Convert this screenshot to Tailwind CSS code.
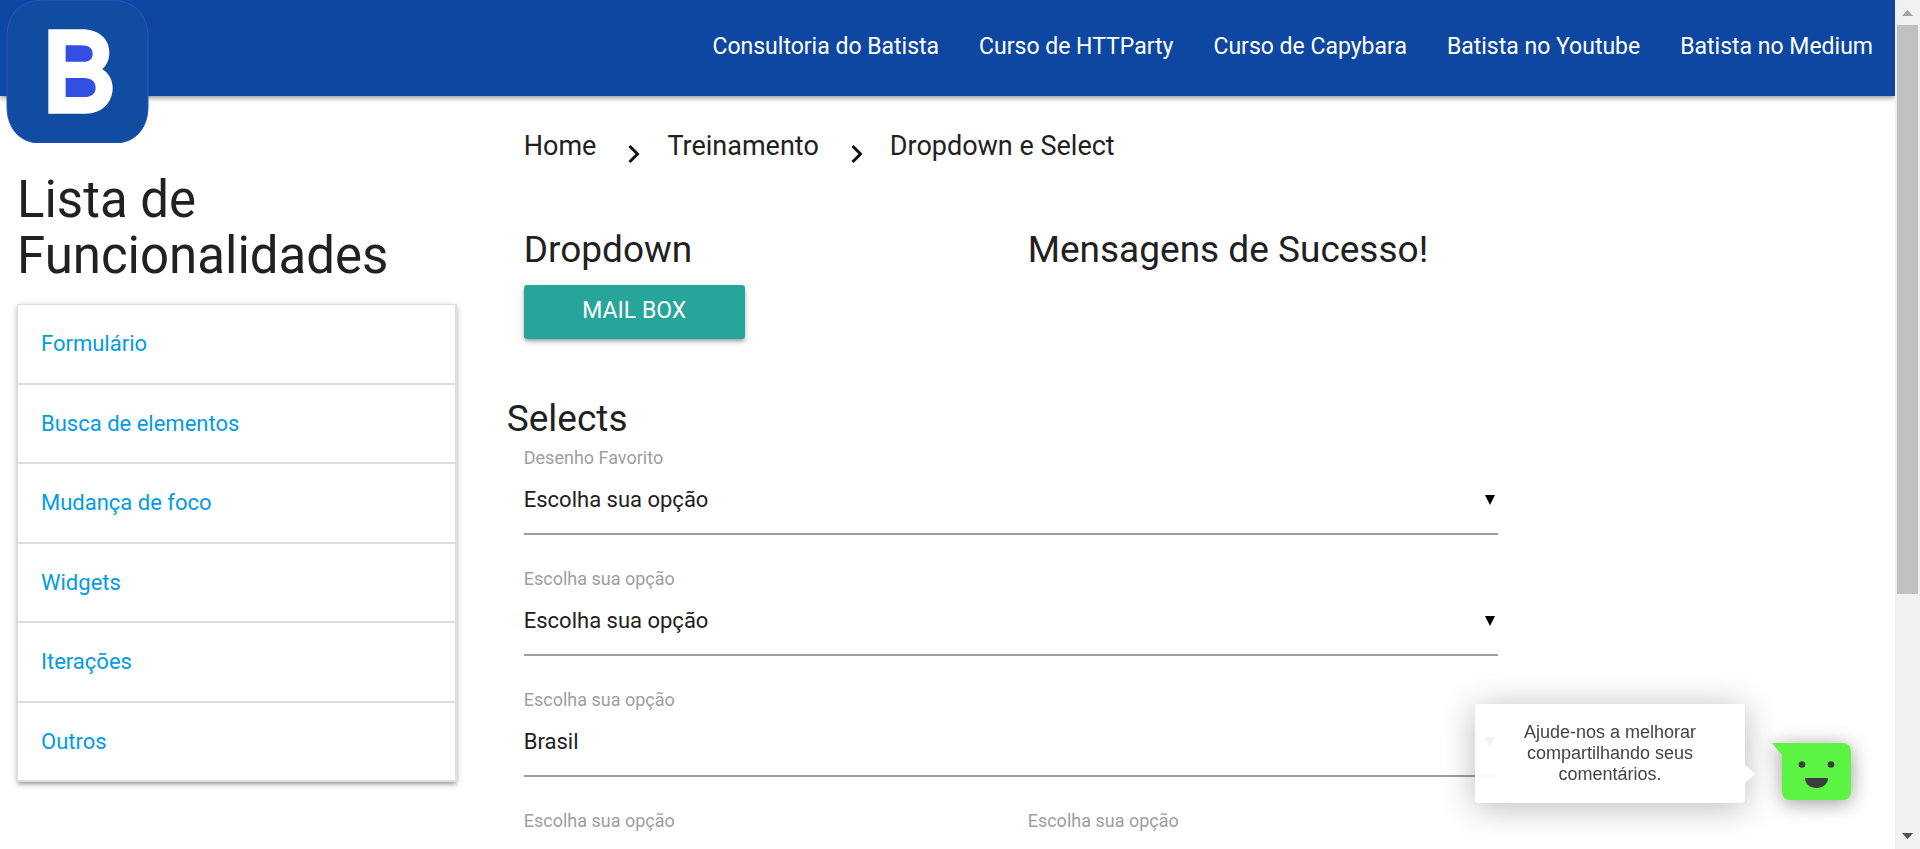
<!DOCTYPE html>
<html lang="pt-BR">
<head>
<meta charset="utf-8">
<meta name="viewport" content="width=device-width, initial-scale=1">
<title>Dropdown e Select</title>
<script src="https://cdn.jsdelivr.net/npm/@tailwindcss/browser@4"></script>
</head>
<body class="bg-white font-['Roboto',sans-serif] text-[22px] text-[#212121]">
<div class="h-screen overflow-hidden pr-[25px]">

<header class="relative z-10 h-24 bg-[#0d47a1] shadow-[0_3px_3px_0_rgba(0,0,0,0.14),0_4px_2px_-3px_rgba(0,0,0,0.12),0_2px_7px_0_rgba(0,0,0,0.2)]">
  <a href="#" aria-label="Batista" class="absolute top-0 left-[6px]">
    <svg class="block h-[143px] w-[143px]" viewBox="18 0 429 429" aria-hidden="true">
      <path d="M125 1H340C400 1 444 45 444 110V320C444 385 405 429 345 429H120C60 429 21 385 21 320V110C21 45 60 1 125 1Z" fill="#104ca0" stroke="#2b50cf" stroke-width="3"/>
      <path d="M145 88H245C298 88 328 118 328 158C328 178 320 196 307 207C326 219 338 240 338 264C338 308 305 341 257 341H145Z" fill="#fff"/>
      <path d="M197 136H243C266 136 278 144 278 161C278 177 268 185 250 185H197ZM197 234H252C274 234 287 245 287 263C287 281 274 291 252 291H197Z" fill="#314fe2"/>
    </svg>
  </a>
  <nav class="flex h-24 justify-end gap-10 pr-[22px] text-[23px] leading-[94px] text-white">
    <a href="#">Consultoria do Batista</a>
    <a href="#">Curso de HTTParty</a>
    <a href="#">Curso de Capybara</a>
    <a href="#">Batista no Youtube</a>
    <a href="#">Batista no Medium</a>
  </nav>
</header>

<div class="flex">
  <aside class="w-1/4 shrink-0 px-[17px] pt-[76px]">
    <h4 class="text-[51px] leading-[56px]">Lista de Funcionalidades</h4>
    <ul class="mt-5 grid h-[478px] auto-rows-fr border-t border-r-2 border-l border-[#ddd] bg-white text-[#039be5] shadow-[0_3px_3px_0_rgba(0,0,0,0.14),0_4px_2px_-3px_rgba(0,0,0,0.12),0_2px_7px_0_rgba(0,0,0,0.2)]">
      <li class="flex items-center border-b-2 border-[#ddd] px-[23px]"><a href="#">Formulário</a></li>
      <li class="flex items-center border-b-2 border-[#ddd] px-[23px]"><a href="#">Busca de elementos</a></li>
      <li class="flex items-center border-b-2 border-[#ddd] px-[23px]"><a href="#">Mudança de foco</a></li>
      <li class="flex items-center border-b-2 border-[#ddd] px-[23px]"><a href="#">Widgets</a></li>
      <li class="flex items-center border-b-2 border-[#ddd] px-[23px]"><a href="#">Iterações</a></li>
      <li class="flex items-center border-b-2 border-[#ddd] px-[23px]"><a href="#">Outros</a></li>
    </ul>
  </aside>

  <main class="grow pt-[30px] pl-[33px]">
    <nav aria-label="Trilha" class="flex items-center pl-[17px] text-[27px] leading-10">
      <a href="#">Home</a>
      <svg class="mt-4 mr-[27px] ml-8 h-5 w-3" viewBox="0 0 12 20" fill="none" stroke="#111" stroke-width="3" aria-hidden="true"><path d="M1.5 2L9.5 10L1.5 18"/></svg>
      <a href="#">Treinamento</a>
      <svg class="mt-4 mr-[27px] ml-8 h-5 w-3" viewBox="0 0 12 20" fill="none" stroke="#111" stroke-width="3" aria-hidden="true"><path d="M1.5 2L9.5 10L1.5 18"/></svg>
      <a href="#">Dropdown e Select</a>
    </nav>

    <div class="w-[72.6%]">
      <section class="mt-16 grid grid-cols-2">
        <div class="px-[17px]">
          <h5 class="text-[37px] leading-10">Dropdown</h5>
          <button type="button" class="mt-[15px] block h-[54px] w-[221px] rounded-[3px] bg-[#26a69a] pb-[2px] text-[23px] text-white uppercase shadow-[0_3px_3px_0_rgba(0,0,0,0.14),0_4px_2px_-3px_rgba(0,0,0,0.12),0_2px_7px_0_rgba(0,0,0,0.2)]">Mail Box</button>
        </div>
        <div class="px-[17px]">
          <h5 class="text-[37px] leading-10">Mensagens de Sucesso!</h5>
        </div>
      </section>

      <section class="mt-[60px]">
        <h5 class="text-[37px] leading-10">Selects</h5>
        <div class="mt-[7px] grid grid-cols-2 gap-y-8">
          <div class="relative col-span-2 px-[17px]">
            <label for="desenho" class="block text-[18px] leading-6 text-[#9e9e9e]">Desenho Favorito</label>
            <select id="desenho" class="block h-[65px] w-full appearance-none border-b-2 border-[#9e9e9e] bg-transparent pb-[4px] outline-none"><option>Escolha sua opção</option></select>
            <svg class="pointer-events-none absolute right-[20px] bottom-[30px] h-[10px] w-[10px]" viewBox="0 0 10 10" aria-hidden="true"><path d="M0 0H10L5 10Z"/></svg>
          </div>
          <div class="relative col-span-2 px-[17px]">
            <label for="opcao" class="block text-[18px] leading-6 text-[#9e9e9e]">Escolha sua opção</label>
            <select id="opcao" class="block h-[65px] w-full appearance-none border-b-2 border-[#9e9e9e] bg-transparent pb-[4px] outline-none"><option>Escolha sua opção</option></select>
            <svg class="pointer-events-none absolute right-[20px] bottom-[30px] h-[10px] w-[10px]" viewBox="0 0 10 10" aria-hidden="true"><path d="M0 0H10L5 10Z"/></svg>
          </div>
          <div class="relative col-span-2 px-[17px]">
            <label for="pais" class="block text-[18px] leading-6 text-[#9e9e9e]">Escolha sua opção</label>
            <select id="pais" class="block h-[65px] w-full appearance-none border-b-2 border-[#9e9e9e] bg-transparent pb-[4px] outline-none"><option>Brasil</option></select>
            <svg class="pointer-events-none absolute right-[20px] bottom-[30px] h-[10px] w-[10px]" viewBox="0 0 10 10" aria-hidden="true"><path d="M0 0H10L5 10Z"/></svg>
          </div>
          <div class="px-[17px]">
            <label for="esquerda" class="block text-[18px] leading-6 text-[#9e9e9e]">Escolha sua opção</label>
            <select id="esquerda" class="block h-[65px] w-full appearance-none border-b-2 border-[#9e9e9e] bg-transparent"></select>
          </div>
          <div class="px-[17px]">
            <label for="direita" class="block text-[18px] leading-6 text-[#9e9e9e]">Escolha sua opção</label>
            <select id="direita" class="block h-[65px] w-full appearance-none border-b-2 border-[#9e9e9e] bg-transparent"></select>
          </div>
        </div>
      </section>
    </div>
  </main>
</div>
</div>

<!-- Feedback widget -->
<div class="fixed right-[69px] bottom-[46px] z-20 flex items-end">
  <div class="relative h-[99px] w-[270px] rounded bg-white/95 pt-[18px] text-center font-['Liberation_Sans',Arial,sans-serif] text-[18px] leading-[21px] text-[#444] shadow-[0_4px_34px_rgba(0,0,0,0.28)]">
    Ajude-nos a melhorar<br>compartilhando seus<br>comentários.
    <svg class="absolute top-[61px] left-full h-[18px] w-[10px]" viewBox="0 0 10 18" aria-hidden="true"><path d="M0 0L10 9L0 18Z" fill="#fff"/></svg>
  </div>
  <button type="button" aria-label="Enviar comentários" class="mb-[3px] ml-[26px]">
    <svg class="block h-[57px] w-[80px] overflow-visible drop-shadow-[0_3px_10px_rgba(0,0,0,0.4)]" viewBox="0 0 80 57" aria-hidden="true">
      <path d="M1 0H71Q80 0 80 9V48Q80 57 71 57H20Q11 57 11 48V12Z" fill="#5bf442"/>
      <circle cx="31" cy="21.500" r="3.300" fill="#3c3c3c"/>
      <circle cx="60" cy="21.500" r="3.300" fill="#3c3c3c"/>
      <path d="M34 35H57C57 41 52 45 45.500 45C39 45 34 41 34 35Z" fill="#3c3c3c"/>
    </svg>
  </button>
</div>

<!-- Scroll track -->
<div class="fixed inset-y-0 right-0 z-30 flex w-[25px] flex-col items-center bg-[#f1f1f1]" aria-hidden="true">
  <svg class="h-[25px] w-[25px] shrink-0" viewBox="0 0 25 25"><path d="M7 16L12.500 10L18 16Z" fill="#a3a3a3"/></svg>
  <div class="h-[67%] w-[21px] bg-[#c1c1c1]"></div>
  <svg class="mt-auto h-[25px] w-[25px] shrink-0" viewBox="0 0 25 25"><path d="M7 9L12.500 15L18 9Z" fill="#505050"/></svg>
</div>
</body>
</html>
